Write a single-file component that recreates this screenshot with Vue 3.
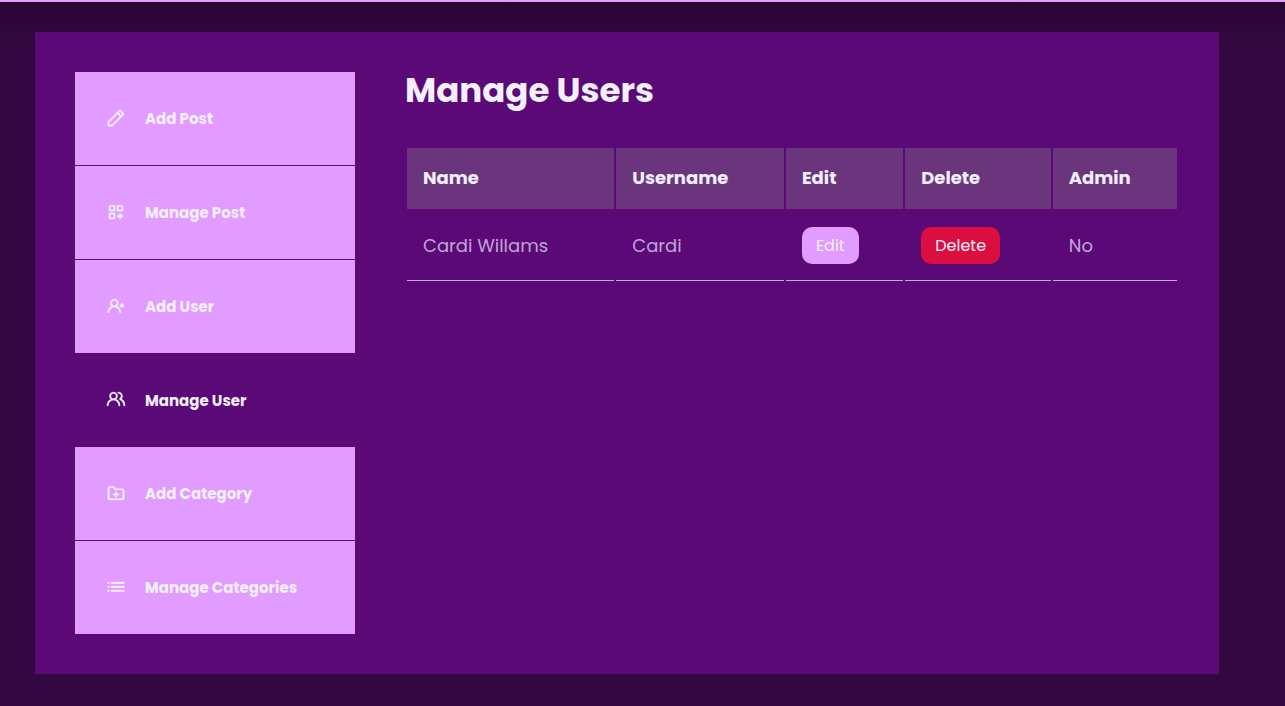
<script setup>
const links = [
  { label: 'Add Post', icon: 'pen' },
  { label: 'Manage Post', icon: 'dashboard' },
  { label: 'Add User', icon: 'userPlus' },
  { label: 'Manage User', icon: 'users', active: true },
  { label: 'Add Category', icon: 'folder' },
  { label: 'Manage Categories', icon: 'list' }
]

const icons = {
  pen: 'M22,7.24a1,1,0,0,0-.29-.71L17.47,2.29A1,1,0,0,0,16.76,2a1,1,0,0,0-.71.29L13.22,5.12h0L2.29,16.05a1,1,0,0,0-.29.71V21a1,1,0,0,0,1,1H7.24A1,1,0,0,0,8,21.71L18.87,10.78h0L21.71,8a1.19,1.19,0,0,0,.22-.33,1,1,0,0,0,0-.24.7.7,0,0,0,0-.14ZM6.83,20H4V17.17l9.93-9.93,2.83,2.83ZM18.17,8.66,15.34,5.83l1.42-1.41,2.82,2.82Z',
  dashboard: 'M3.5 4H11V11H3.5ZM5.3 5.6V9.4H9.2V5.6ZM13 4H20.5V11H13ZM14.8 5.6V9.4H18.7V5.6ZM3.5 13H11V20.5H3.5ZM5.3 14.8V18.7H9.2V14.8ZM15.9 13.5H17.9V16H20.5V18H17.9V20.5H15.9V18H13.2V16H15.9Z',
  userPlus: 'M21,10.5H20v-1a1,1,0,0,0-2,0v1H17a1,1,0,0,0,0,2h1v1a1,1,0,0,0,2,0v-1h1a1,1,0,0,0,0-2Zm-7.7,1.72A4.92,4.92,0,0,0,15,8.5a5,5,0,0,0-10,0,4.92,4.92,0,0,0,1.7,3.72A8,8,0,0,0,2,19.5a1,1,0,0,0,2,0,6,6,0,0,1,12,0,1,1,0,0,0,2,0A8,8,0,0,0,13.3,12.22ZM10,11.5a3,3,0,1,1,3-3A3,3,0,0,1,10,11.5Z',
  users: 'M12.3,12.22A4.92,4.92,0,0,0,14,8.5a5,5,0,0,0-10,0,4.92,4.92,0,0,0,1.7,3.72A8,8,0,0,0,1,19.5a1,1,0,0,0,2,0,6,6,0,0,1,12,0,1,1,0,0,0,2,0A8,8,0,0,0,12.3,12.22ZM9,11.5a3,3,0,1,1,3-3A3,3,0,0,1,9,11.5Zm9.74.32A5,5,0,0,0,15,3.5a1,1,0,0,0,0,2,3,3,0,0,1,3,3,3,3,0,0,1-1.5,2.59,1,1,0,0,0-.5.84,1,1,0,0,0,.45.86l.39.26.13.07a7,7,0,0,1,4,6.38,1,1,0,0,0,2,0A9,9,0,0,0,18.74,11.82Z',
  folder: 'M5 4H9.5a1 1 0 0 1 .95.68L11.2 6.5H19a3 3 0 0 1 3 3v8a3 3 0 0 1-3 3H5a3 3 0 0 1-3-3V7a3 3 0 0 1 3-3ZM5 6a1 1 0 0 0-1 1v10.500a1 1 0 0 0 1 1h14a1 1 0 0 0 1-1V9.500a1 1 0 0 0-1-1h-8.500a1 1 0 0 1-.95-.68L8.800 6ZM11 10.500h2v2.200h2.500v2H13V17h-2v-2.300H8.500v-2H11Z',
  list: 'M2 6h2v2H2ZM6 6h16v2H6ZM2 10.800h2v2H2ZM6 10.800h16v2H6ZM2 15.600h2v2H2ZM6 15.600h16v2H6Z'
}

const users = [{ name: 'Cardi Willams', username: 'Cardi', admin: 'No' }]
</script>

<template>
  <div class="page">
    <section class="dashboard">
      <aside>
        <nav aria-label="Dashboard">
          <a
            v-for="link in links"
            :key="link.label"
            href="#"
            class="link"
            :class="{ active: link.active }"
            :aria-current="link.active ? 'page' : undefined"
          >
            <svg class="icon" viewBox="0 0 24 24" aria-hidden="true">
              <path :d="icons[link.icon]" fill-rule="evenodd" />
            </svg>
            <span>{{ link.label }}</span>
          </a>
        </nav>
      </aside>
      <main>
        <h1>Manage Users</h1>
        <table>
          <colgroup>
            <col class="name" />
            <col class="username" />
            <col class="edit" />
            <col class="delete" />
            <col class="admin" />
          </colgroup>
          <thead>
            <tr>
              <th>Name</th>
              <th>Username</th>
              <th>Edit</th>
              <th>Delete</th>
              <th>Admin</th>
            </tr>
          </thead>
          <tbody>
            <tr v-for="user in users" :key="user.username">
              <td>{{ user.name }}</td>
              <td>{{ user.username }}</td>
              <td><a href="#" class="btn">Edit</a></td>
              <td><a href="#" class="btn danger">Delete</a></td>
              <td>{{ user.admin }}</td>
            </tr>
          </tbody>
        </table>
      </main>
    </section>
  </div>
</template>

<style>
body {
  background: #330841;
}
</style>

<style scoped>
* {
  box-sizing: border-box;
}
.page {
  min-height: 100vh;
  padding: 30px 66px 32px 35px;
  border-top: 2px solid #e29bff;
  background: linear-gradient(#290534, #330841 40px);
  color: #f2f0fe;
  font-family: Poppins, Inter, sans-serif;
}
.dashboard {
  display: grid;
  grid-template-columns: 280px 1fr;
  gap: 50px;
  padding: 40px;
  background: #5a0977;
}
nav {
  display: flex;
  flex-direction: column;
  gap: 1px;
}
.link {
  display: flex;
  align-items: center;
  gap: 19px;
  height: 93px;
  padding: 0 31px;
  background: #e29bff;
  color: #f2f0fe;
  font-size: 15px;
  font-weight: 700;
  text-decoration: none;
}
.link.active {
  height: 92px;
  background: #5a0977;
}
.icon {
  width: 20px;
  height: 20px;
  margin-bottom: 2px;
  fill: currentColor;
  stroke: currentColor;
  stroke-width: 0.3;
}
h1 {
  margin: 0 0 38px;
  font-size: 34px;
  line-height: 36px;
  font-weight: 700;
}
table {
  width: 100%;
  table-layout: fixed;
  border-spacing: 2px;
  text-align: left;
  font-size: 18px;
  line-height: 29px;
}
.name { width: 27.2%; }
.username { width: 22%; }
.edit { width: 15.4%; }
.delete { width: 19.1%; }
.admin { width: 16.3%; }
th {
  height: 61px;
  padding: 0 16px 2px;
  background: #6b357e;
  font-weight: 700;
}
td {
  height: 70px;
  padding: 0 16px;
  border-bottom: 1px solid #c2a8d6;
  color: #c2a5d8;
}
.btn {
  display: inline-block;
  padding: 4px 14px;
  border-radius: 10px;
  background: #e29bff;
  color: #f2f0fe;
  font-size: 16px;
  text-decoration: none;
  vertical-align: middle;
}
.btn.danger {
  background: #da0f3f;
}
</style>
